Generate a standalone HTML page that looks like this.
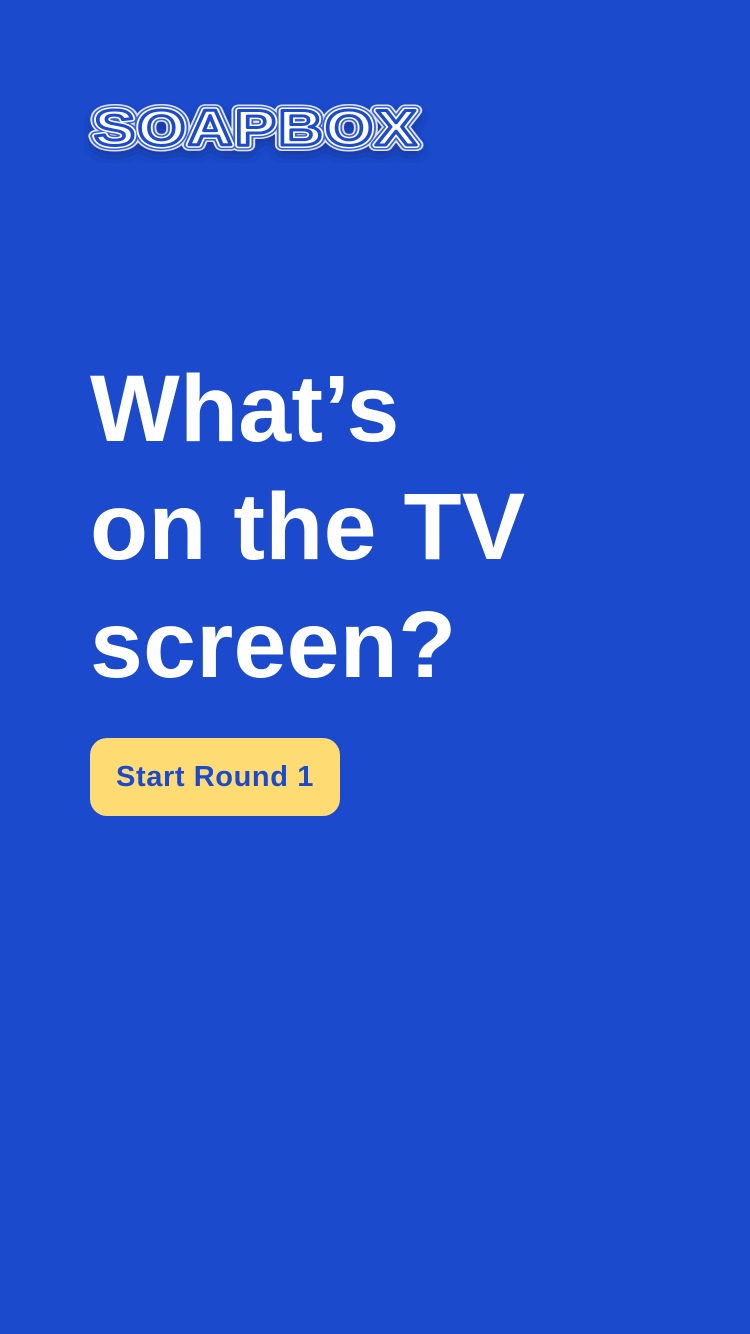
<!DOCTYPE html>
<html><head><meta charset="utf-8"><style>
html,body{margin:0;padding:0;}
body{width:750px;height:1334px;background:#1b4bcc;position:relative;overflow:hidden;font-family:"Liberation Sans",sans-serif;}
.logo{position:absolute;left:84px;top:93px;}
h1{position:absolute;left:90px;top:350px;margin:0;color:#fff;font-weight:bold;font-size:95px;line-height:118px;letter-spacing:0.3px;}
.btn{position:absolute;left:90px;top:738px;width:250px;height:78px;border-radius:17px;background:#ffdb73;color:#1b4bcc;font-weight:bold;font-size:29px;line-height:78px;text-align:center;letter-spacing:0.6px;}
</style></head><body>
<svg class="logo" width="350" height="70" viewBox="0 0 350 70">
<defs><filter id="sh" x="-10%" y="-30%" width="120%" height="180%"><feDropShadow dx="0" dy="6" stdDeviation="5" flood-color="#0a2a80" flood-opacity="0.5"/></filter></defs>
<g font-family="Liberation Sans, sans-serif" font-weight="bold" font-size="50" letter-spacing="2" stroke-linejoin="round" filter="url(#sh)">
<text x="10" y="52" textLength="325" lengthAdjust="spacingAndGlyphs" fill="#fff" stroke="#dfe6ff" stroke-width="12">SOAPBOX</text>
<text x="10" y="52" textLength="325" lengthAdjust="spacingAndGlyphs" fill="#fff" stroke="#3a5fd6" stroke-width="9">SOAPBOX</text>
<text x="10" y="52" textLength="325" lengthAdjust="spacingAndGlyphs" fill="#fff" stroke="#fff" stroke-width="6">SOAPBOX</text>
<text x="10" y="52" textLength="325" lengthAdjust="spacingAndGlyphs" fill="#fff" stroke="#1b4bcc" stroke-width="3">SOAPBOX</text>
</g></svg>
<h1>What’s<br>on the TV<br>screen?</h1>
<div class="btn">Start Round 1</div>
</body></html>
